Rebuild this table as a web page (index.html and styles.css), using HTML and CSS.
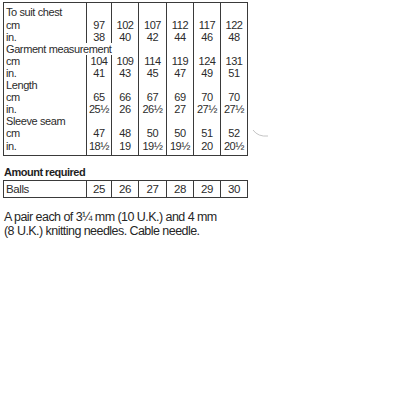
FILE: index.html
```html
<!DOCTYPE html>
<html>
<head>
<meta charset="utf-8">
<link rel="stylesheet" href="styles.css">
</head>
<body>
<div class="page">
  <table class="sizes">
    <colgroup>
      <col class="c-label"><col class="c-1"><col class="c-n"><col class="c-w"><col class="c-n"><col class="c-n"><col class="c-n">
    </colgroup>
    <tr class="first"><td class="lbl">To suit chest</td><td></td><td></td><td></td><td></td><td></td><td></td></tr>
    <tr><td class="lbl">cm</td><td>97</td><td>102</td><td>107</td><td>112</td><td>117</td><td>122</td></tr>
    <tr><td class="lbl">in.</td><td>38</td><td>40</td><td>42</td><td>44</td><td>46</td><td>48</td></tr>
    <tr><td class="lbl" colspan="3">Garment measurement</td><td></td><td></td><td></td><td></td></tr>
    <tr><td class="lbl">cm</td><td>104</td><td>109</td><td>114</td><td>119</td><td>124</td><td>131</td></tr>
    <tr><td class="lbl">in.</td><td>41</td><td>43</td><td>45</td><td>47</td><td>49</td><td>51</td></tr>
    <tr><td class="lbl">Length</td><td></td><td></td><td></td><td></td><td></td><td></td></tr>
    <tr><td class="lbl">cm</td><td>65</td><td>66</td><td>67</td><td>69</td><td>70</td><td>70</td></tr>
    <tr><td class="lbl">in.</td><td>25½</td><td>26</td><td>26½</td><td>27</td><td>27½</td><td>27½</td></tr>
    <tr><td class="lbl">Sleeve seam</td><td></td><td></td><td></td><td></td><td></td><td></td></tr>
    <tr><td class="lbl">cm</td><td>47</td><td>48</td><td>50</td><td>50</td><td>51</td><td>52</td></tr>
    <tr class="last"><td class="lbl">in.</td><td>18½</td><td>19</td><td>19½</td><td>19½</td><td>20</td><td>20½</td></tr>
  </table>

  <h2 class="heading">Amount required</h2>
  <table class="balls">
    <colgroup>
      <col class="c-label"><col class="c-1"><col class="c-n"><col class="c-w"><col class="c-n"><col class="c-n"><col class="c-n">
    </colgroup>
    <tr><td class="lbl">Balls</td><td>25</td><td>26</td><td>27</td><td>28</td><td>29</td><td>30</td></tr>
  </table>

  <p class="needles">A pair each of 3¼ mm (10 U.K.) and 4 mm<br>(8 U.K.) knitting needles. Cable needle.</p>

  <svg class="mark" width="20" height="12" viewBox="0 0 20 12"><path d="M1 2 Q6 9 16 8" fill="none" stroke="#bdbdbd" stroke-width="0.9"/></svg>
</div>
</body>
</html>
```
FILE: styles.css
```css
html, body {
  margin: 0;
  padding: 0;
  background: #fff;
}
.page {
  position: relative;
  padding: 2px 0 0 3px;
  font-family: "Liberation Sans", Arial, sans-serif;
  color: #2b2b2b;
}
table {
  border-collapse: collapse;
  table-layout: fixed;
  width: 244px;
  font-size: 11px;
  letter-spacing: -0.4px;
}
.c-label { width: 83px; }
.c-1 { width: 25px; }
.c-n { width: 27px; }
.c-w { width: 28px; }
.sizes {
  border: 1px solid #3a3a3a;
}
.sizes td {
  border-left: 1px solid #3a3a3a;
  padding: 0;
  height: 12px;
  line-height: 12px;
  text-align: center;
  white-space: nowrap;
  vertical-align: middle;
}
.sizes td.lbl {
  text-align: left;
  padding-left: 2px;
  border-left: none;
}
.sizes tr.first td {
  height: 15px;
  padding-top: 1px;
}
.sizes tr.last td {
  height: 15px;
  vertical-align: top;
  padding-top: 1px;
}
.heading {
  margin: 10px 0 0 1px;
  font-size: 11px;
  font-weight: bold;
  line-height: 12px;
  letter-spacing: -0.5px;
  color: #1e1e1e;
}
.balls {
  margin-top: 2px;
  border: 1px solid #3a3a3a;
}
.balls td {
  border-left: 1px solid #3a3a3a;
  height: 16px;
  padding: 0;
  line-height: 16px;
  text-align: center;
  font-size: 11.5px;
}
.balls td.lbl {
  text-align: left;
  padding-left: 2px;
}
.needles {
  margin: 13px 0 0 1px;
  font-size: 12.5px;
  line-height: 13.5px;
  letter-spacing: -0.55px;
  color: #262626;
}
.mark {
  position: absolute;
  left: 252px;
  top: 128px;
}
```
